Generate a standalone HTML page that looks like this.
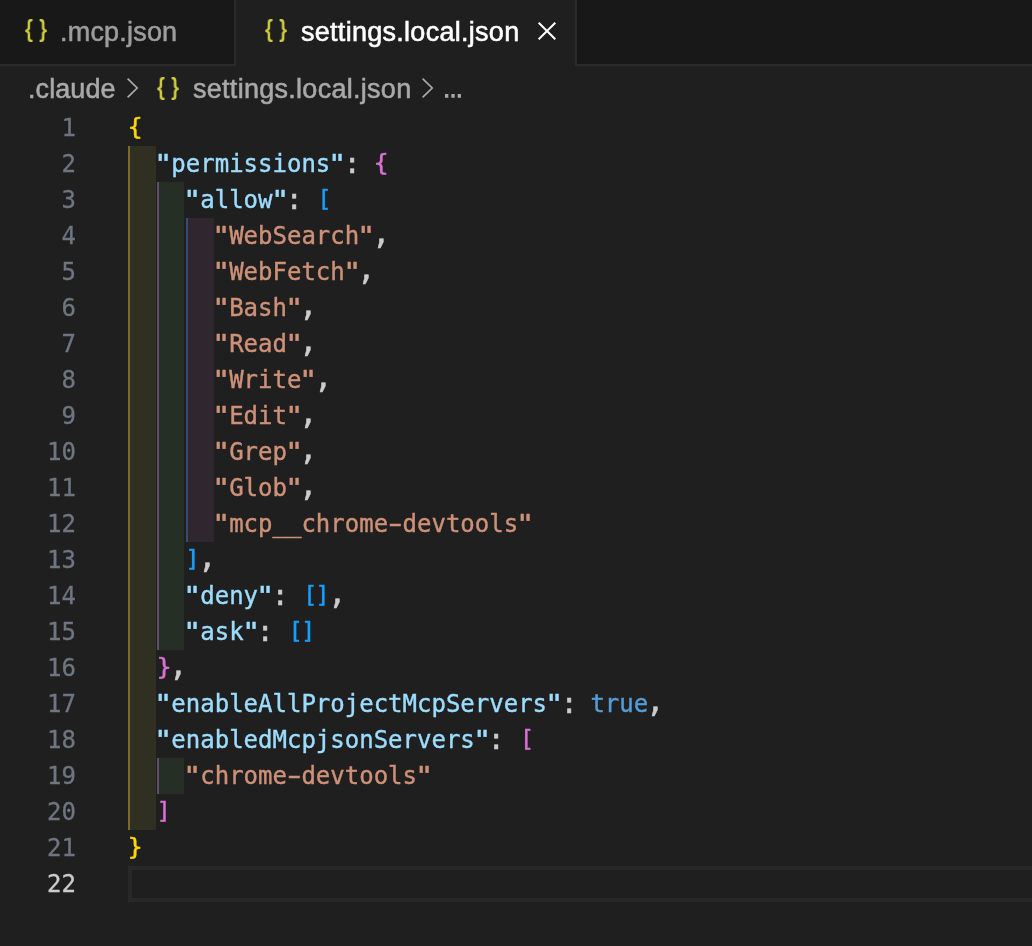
<!DOCTYPE html>
<html lang="en">
<head>
<meta charset="utf-8">
<title>settings.local.json</title>
<style>
  html, body { margin: 0; padding: 0; }
  body {
    width: 1032px; height: 946px; overflow: hidden; position: relative;
    background: #1f1f1f;
    font-family: "Liberation Sans", sans-serif;
    -webkit-font-smoothing: antialiased;
  }
  .abs { position: absolute; }
  .ln, .code, .ui, .brace { will-change: transform; }

  /* ---------- tab bar ---------- */
  #tabbar { left: 0; top: 0; width: 1032px; height: 64px; background: #181818; border-bottom: 2px solid #2b2b2b; }
  .tab { top: 0; height: 64px; box-sizing: content-box; border-right: 2px solid #2b2b2b; }
  #tab1 { left: 0; width: 234px; background: #181818; border-bottom: 2px solid #2b2b2b; }
  #tab2 { left: 236px; width: 339px; height: 66px; background: #1f1f1f; }
  .ui { font-size: 27px; line-height: 30px; white-space: pre; -webkit-text-stroke: 0.55px; }
  .brace { font-family: "Liberation Sans", sans-serif; font-weight: bold; color: #cbcb41; white-space: pre; font-size: 23.2px; line-height: 30px; word-spacing: 0.8px; transform: scaleX(0.87); transform-origin: 0 0; }

  /* ---------- breadcrumb ---------- */
  .bc { color: #a9a9a9; }

  /* ---------- editor ---------- */
  #editor { left: 0; top: 110px; width: 1032px; height: 836px; }
  .ln, .code {
    font-family: "DejaVu Sans Mono", "Liberation Mono", monospace;
    font-size: 24px; line-height: 36px; height: 36px; white-space: pre;
  }
  .ln { left: 0; width: 76px; text-align: right; color: #6e7681; -webkit-text-stroke: 0.3px; }
  .ln.cur { color: #cccccc; }
  .code { left: 128px; color: #cccccc; letter-spacing: 0; -webkit-text-stroke: 0.4px; }
  .k { color: #9cdcfe; }
  .s { color: #ce9178; }
  .b { color: #569cd6; }
  .y { color: #ffd700; }
  .p { color: #da70d6; }
  .u { color: #179fff; }
  .lb, .rb, .lc, .rc { display: inline-block; }
  .lb { transform: translate(1.5px,-1px) scaleY(0.95); }
  .rb { transform: translate(-0.5px,-1px) scaleY(0.95); }
  .lc, .rc { transform: translate(0,-1px) scale(1.06,0.97); }
  .q, .cm, .cl { display: inline-block; }
  .q { transform: scaleX(1.3); }
  .qo { transform: translateX(-1px) scaleX(1.3); }
  .cl { transform: scale(1.2); transform-origin: 50% 62%; }
  .cm { transform: translate(0,-0.5px) scale(1.28,1.3); transform-origin: 50% 72%; }
  .hy { display: inline-block; transform: scaleX(1.7); }
</style>
</head>
<body>

<!-- tab bar -->
<div id="tabbar" class="abs"></div>
<div id="tab1" class="abs tab">
  <span class="abs brace" style="left:24.5px;top:13.6px;">{ }</span>
  <span class="abs ui" style="left:60px;top:16.6px;color:#9d9d9d;letter-spacing:0.2px;">.mcp.json</span>
</div>
<div id="tab2" class="abs tab">
  <span class="abs brace" style="left:28.5px;top:13.6px;">{ }</span>
  <span class="abs ui" style="left:64.6px;top:16.6px;color:#ffffff;letter-spacing:0.28px;">settings.local.json</span>
  <svg class="abs" style="left:300px;top:20px;" width="22" height="22" viewBox="0 0 22 22"><path d="M2.7 2.7 L19.3 19.3 M19.3 2.7 L2.7 19.3" stroke="#ffffff" stroke-width="2" fill="none"/></svg>
</div>

<!-- breadcrumb -->
<div id="crumbs" class="abs" style="left:0;top:66px;width:1032px;height:44px;">
  <span class="abs ui bc" style="left:28px;top:8px;letter-spacing:0.07px;">.claude</span>
  <svg class="abs" style="left:122px;top:10px;" width="20" height="24" viewBox="0 0 20 24"><path d="M5.6 2.6 L15.2 12 L5.6 21.4" stroke="#a9a9a9" stroke-width="1.7" fill="none"/></svg>
  <span class="abs brace" style="left:156.6px;top:5.6px;">{ }</span>
  <span class="abs ui bc" style="left:192.6px;top:8px;letter-spacing:0.28px;">settings.local.json</span>
  <svg class="abs" style="left:417px;top:10px;" width="20" height="24" viewBox="0 0 20 24"><path d="M5.6 2.6 L15.2 12 L5.6 21.4" stroke="#a9a9a9" stroke-width="1.7" fill="none"/></svg>
  <span class="abs ui bc" style="left:442.5px;top:9.4px;font-size:20px;-webkit-text-stroke:1.4px;">…</span>
</div>

<!-- editor -->
<div id="editor" class="abs">
  <!-- indent guides -->
  <div class="abs" style="left:128px;top:36px;width:28px;height:684px;background:#2f2f22;"></div>
  <div class="abs" style="left:128px;top:36px;width:2px;height:684px;background:#7a6a25;"></div>
  <div class="abs" style="left:157px;top:72px;width:27px;height:468px;background:#262f26;"></div>
  <div class="abs" style="left:157px;top:72px;width:2px;height:468px;background:#634a66;"></div>
  <div class="abs" style="left:157px;top:648px;width:27px;height:36px;background:#262f26;"></div>
  <div class="abs" style="left:157px;top:648px;width:2px;height:36px;background:#634a66;"></div>
  <div class="abs" style="left:186px;top:108px;width:28px;height:324px;background:#2f262f;"></div>
  <div class="abs" style="left:186px;top:108px;width:2px;height:324px;background:#364b74;"></div>
  <!-- current line -->
  <div class="abs" style="left:128px;top:756px;width:920px;height:28px;border:4px solid #282828;"></div>
  <!-- lines -->
  <div class="abs ln" style="top:0px;">1</div>
  <div class="abs code" style="top:0px;"><span class="y"><span class="lc">{</span></span></div>
  <div class="abs ln" style="top:36px;">2</div>
  <div class="abs code" style="top:36px;">  <span class="k"><span class="q qo">"</span>permissions<span class="q">"</span></span><span class="cl">:</span> <span class="p"><span class="lc">{</span></span></div>
  <div class="abs ln" style="top:72px;">3</div>
  <div class="abs code" style="top:72px;">    <span class="k"><span class="q qo">"</span>allow<span class="q">"</span></span><span class="cl">:</span> <span class="u"><span class="lb">[</span></span></div>
  <div class="abs ln" style="top:108px;">4</div>
  <div class="abs code" style="top:108px;">      <span class="s"><span class="q qo">"</span>WebSearch<span class="q">"</span></span><span class="cm">,</span></div>
  <div class="abs ln" style="top:144px;">5</div>
  <div class="abs code" style="top:144px;">      <span class="s"><span class="q qo">"</span>WebFetch<span class="q">"</span></span><span class="cm">,</span></div>
  <div class="abs ln" style="top:180px;">6</div>
  <div class="abs code" style="top:180px;">      <span class="s"><span class="q qo">"</span>Bash<span class="q">"</span></span><span class="cm">,</span></div>
  <div class="abs ln" style="top:216px;">7</div>
  <div class="abs code" style="top:216px;">      <span class="s"><span class="q qo">"</span>Read<span class="q">"</span></span><span class="cm">,</span></div>
  <div class="abs ln" style="top:252px;">8</div>
  <div class="abs code" style="top:252px;">      <span class="s"><span class="q qo">"</span>Write<span class="q">"</span></span><span class="cm">,</span></div>
  <div class="abs ln" style="top:288px;">9</div>
  <div class="abs code" style="top:288px;">      <span class="s"><span class="q qo">"</span>Edit<span class="q">"</span></span><span class="cm">,</span></div>
  <div class="abs ln" style="top:324px;">10</div>
  <div class="abs code" style="top:324px;">      <span class="s"><span class="q qo">"</span>Grep<span class="q">"</span></span><span class="cm">,</span></div>
  <div class="abs ln" style="top:360px;">11</div>
  <div class="abs code" style="top:360px;">      <span class="s"><span class="q qo">"</span>Glob<span class="q">"</span></span><span class="cm">,</span></div>
  <div class="abs ln" style="top:396px;">12</div>
  <div class="abs code" style="top:396px;">      <span class="s"><span class="q qo">"</span>mcp__chrome<span class="hy">-</span>devtools<span class="q">"</span></span></div>
  <div class="abs ln" style="top:432px;">13</div>
  <div class="abs code" style="top:432px;">    <span class="u"><span class="rb">]</span></span><span class="cm">,</span></div>
  <div class="abs ln" style="top:468px;">14</div>
  <div class="abs code" style="top:468px;">    <span class="k"><span class="q qo">"</span>deny<span class="q">"</span></span><span class="cl">:</span> <span class="u"><span class="lb">[</span><span class="rb">]</span></span><span class="cm">,</span></div>
  <div class="abs ln" style="top:504px;">15</div>
  <div class="abs code" style="top:504px;">    <span class="k"><span class="q qo">"</span>ask<span class="q">"</span></span><span class="cl">:</span> <span class="u"><span class="lb">[</span><span class="rb">]</span></span></div>
  <div class="abs ln" style="top:540px;">16</div>
  <div class="abs code" style="top:540px;">  <span class="p"><span class="rc">}</span></span><span class="cm">,</span></div>
  <div class="abs ln" style="top:576px;">17</div>
  <div class="abs code" style="top:576px;">  <span class="k"><span class="q qo">"</span>enableAllProjectMcpServers<span class="q">"</span></span><span class="cl">:</span> <span class="b">true</span><span class="cm">,</span></div>
  <div class="abs ln" style="top:612px;">18</div>
  <div class="abs code" style="top:612px;">  <span class="k"><span class="q qo">"</span>enabledMcpjsonServers<span class="q">"</span></span><span class="cl">:</span> <span class="p"><span class="lb">[</span></span></div>
  <div class="abs ln" style="top:648px;">19</div>
  <div class="abs code" style="top:648px;">    <span class="s"><span class="q qo">"</span>chrome<span class="hy">-</span>devtools<span class="q">"</span></span></div>
  <div class="abs ln" style="top:684px;">20</div>
  <div class="abs code" style="top:684px;">  <span class="p"><span class="rb">]</span></span></div>
  <div class="abs ln" style="top:720px;">21</div>
  <div class="abs code" style="top:720px;"><span class="y"><span class="rc">}</span></span></div>
  <div class="abs ln cur" style="top:756px;">22</div>
</div>

</body>
</html>
